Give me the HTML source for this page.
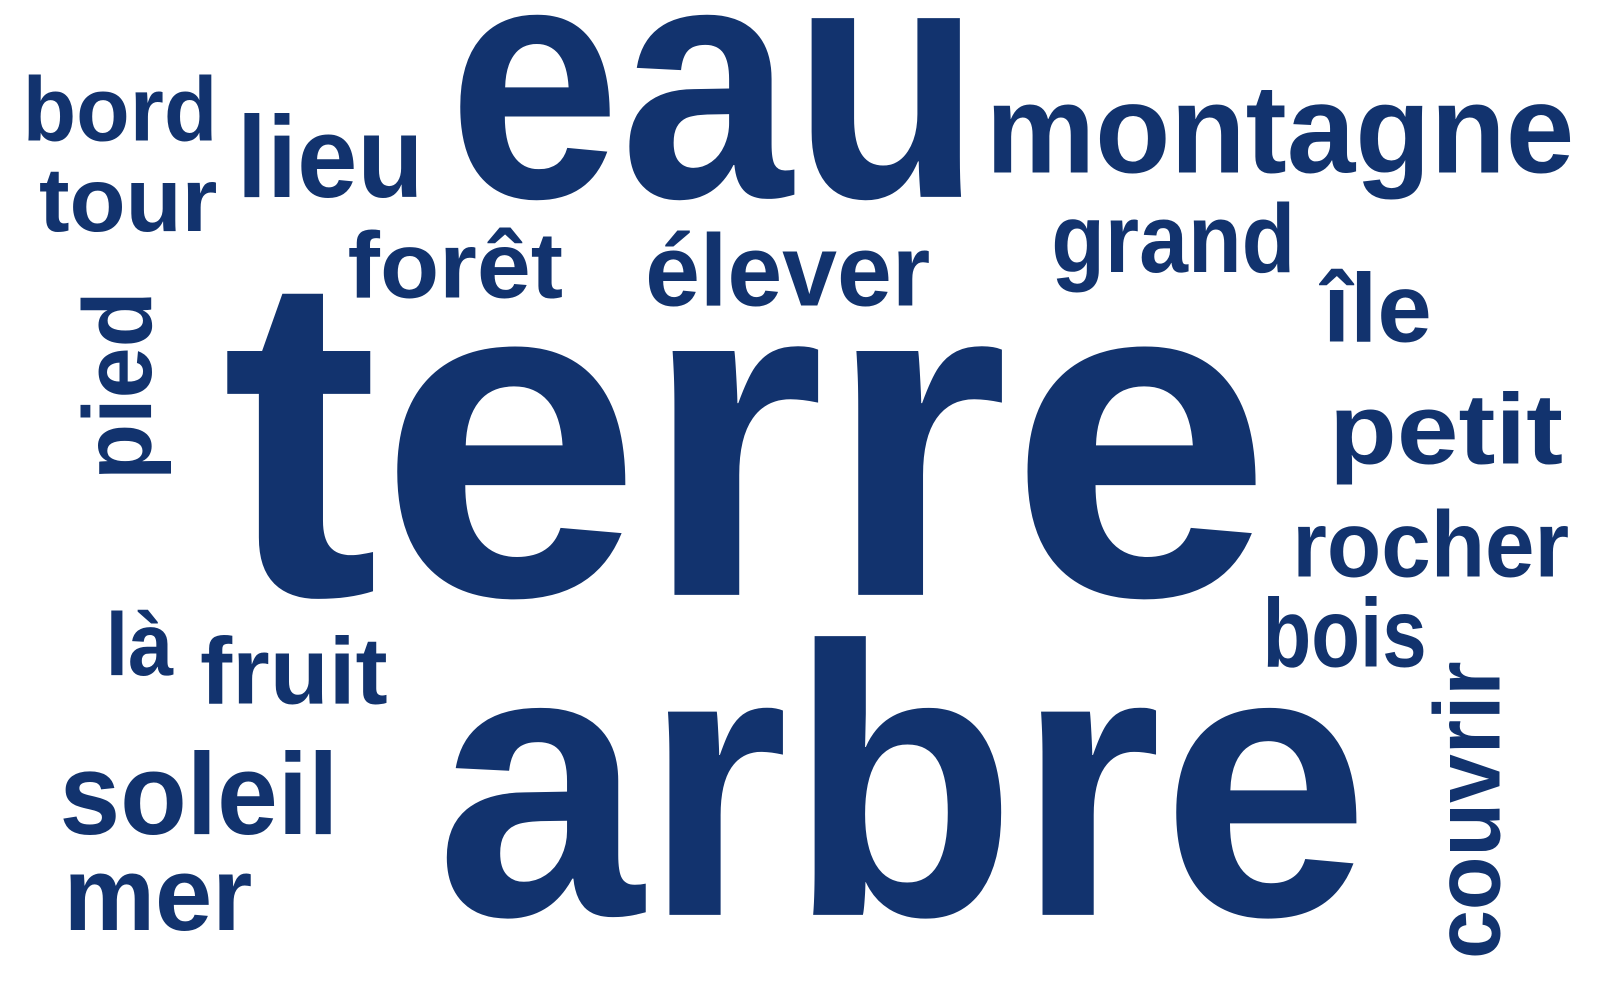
<!DOCTYPE html>
<html><head><meta charset="utf-8"><style>
html,body{margin:0;padding:0;background:#fff;width:1600px;height:1000px;overflow:hidden}
svg{display:block}
text{font-family:"Liberation Sans",sans-serif;font-weight:bold;fill:#12336e}
</style></head><body>
<svg width="1600" height="1000" viewBox="0 0 1600 1000" xmlns="http://www.w3.org/2000/svg">
<g transform="scale(1.0256)">
<text x="437" y="192" font-size="330" textLength="520" lengthAdjust="spacingAndGlyphs">eau</text>
<text x="216" y="580" font-size="450" textLength="1024" lengthAdjust="spacingAndGlyphs">terre</text>
<text x="425" y="892" font-size="375" textLength="910" lengthAdjust="spacingAndGlyphs">arbre</text>
<text x="961" y="168" font-size="123" textLength="574" lengthAdjust="spacingAndGlyphs">montagne</text>
<text x="22" y="137" font-size="89" textLength="190" lengthAdjust="spacingAndGlyphs">bord</text>
<text x="38" y="225" font-size="89" textLength="174" lengthAdjust="spacingAndGlyphs">tour</text>
<text x="231" y="192" font-size="113" textLength="182" lengthAdjust="spacingAndGlyphs">lieu</text>
<text x="339" y="290" font-size="91" textLength="210" lengthAdjust="spacingAndGlyphs">forêt</text>
<text x="629" y="298" font-size="100" textLength="278" lengthAdjust="spacingAndGlyphs">élever</text>
<text x="1025" y="265" font-size="95" textLength="238" lengthAdjust="spacingAndGlyphs">grand</text>
<text x="1290" y="333" font-size="95" textLength="106" lengthAdjust="spacingAndGlyphs">île</text>
<text x="1296" y="452" font-size="98" textLength="228" lengthAdjust="spacingAndGlyphs">petit</text>
<text x="1260" y="562" font-size="91" textLength="270" lengthAdjust="spacingAndGlyphs">rocher</text>
<text x="1231" y="650" font-size="95" textLength="160" lengthAdjust="spacingAndGlyphs">bois</text>
<text x="103" y="658" font-size="87" textLength="66" lengthAdjust="spacingAndGlyphs">là</text>
<text x="195" y="686" font-size="92" textLength="183" lengthAdjust="spacingAndGlyphs">fruit</text>
<text x="58" y="813" font-size="113" textLength="272" lengthAdjust="spacingAndGlyphs">soleil</text>
<text x="62" y="907" font-size="102" textLength="184" lengthAdjust="spacingAndGlyphs">mer</text>
<text transform="translate(147,468) rotate(-90)" font-size="95" textLength="184" lengthAdjust="spacingAndGlyphs">pied</text>
<text transform="translate(1462,935) rotate(-90)" font-size="91" textLength="290" lengthAdjust="spacingAndGlyphs">couvrir</text>
</g>
</svg>
</body></html>
